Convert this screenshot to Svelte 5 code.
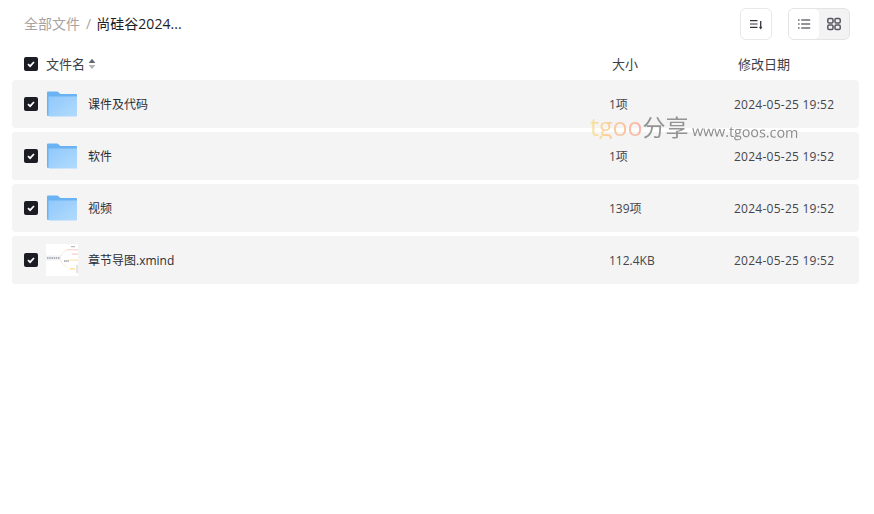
<script>
  let files = [
    { name: "课件及代码", size: "1项", date: "2024-05-25 19:52", type: "folder" },
    { name: "软件", size: "1项", date: "2024-05-25 19:52", type: "folder" },
    { name: "视频", size: "139项", date: "2024-05-25 19:52", type: "folder" },
    { name: "章节导图.xmind", size: "112.4KB", date: "2024-05-25 19:52", type: "xmind" },
  ];
</script>

{#snippet check()}
  <span class="check">
    <svg width="10" height="10" viewBox="0 0 10 10"><path d="M2 5.2 4.1 7.2 8 3" fill="none" stroke="#fff" stroke-width="1.7" /></svg>
  </span>
{/snippet}

<div class="page">
  <div class="top">
    <div class="crumbs">
      <span class="root">全部文件</span>
      <span class="sep">/</span>
      <span class="current">尚硅谷2024...</span>
    </div>
    <div class="tools">
      <button class="sort" aria-label="排序">
        <svg width="16" height="16" viewBox="0 0 16 16" fill="none" stroke="#33343c" stroke-width="1.1">
          <path d="M2 4.6h7.5M2 8h7.5M2 11.4h7.5" />
          <path d="M12.7 5v7" stroke-width="1.3" />
          <path d="M11.4 11l1.3 2.2 1.3-2.2z" fill="#33343c" stroke-width=".5" />
        </svg>
      </button>
      <div class="switch">
        <button class="on" aria-label="列表">
          <svg width="14" height="14" viewBox="0 0 14 14" fill="none" stroke="#26272e" stroke-width="1.2">
            <path d="M1 3h1.6M1 7h1.6M1 11h1.6M4.2 3h9M4.2 7h9M4.2 11h9" />
          </svg>
        </button>
        <button class="off" aria-label="网格">
          <svg width="14" height="14" viewBox="0 0 14 14" fill="none" stroke="#55565e" stroke-width="1.5">
            <rect x="0.8" y="1.4" width="5.2" height="4.6" rx="1.3" />
            <rect x="8" y="1.4" width="5.2" height="4.6" rx="1.3" />
            <rect x="0.8" y="8" width="5.2" height="4.6" rx="1.3" />
            <rect x="8" y="8" width="5.2" height="4.6" rx="1.3" />
          </svg>
        </button>
      </div>
    </div>
  </div>

  <div class="head">
    {@render check()}
    <span class="h-name">文件名</span>
    <svg class="arrows" width="8" height="12" viewBox="0 0 8 12">
      <path d="M4 .8 7.4 5H.6z" fill="#66676e" />
      <path d="M4 11.2 7.4 7H.6z" fill="#b5b5b5" />
    </svg>
    <span class="h-size">大小</span>
    <span class="h-date">修改日期</span>
  </div>

  <div class="list">
    {#each files as f}
      <div class="row">
        {@render check()}
        <span class="icon">
          {#if f.type === "folder"}
            <svg width="32" height="32" viewBox="0 0 32 32">
              <defs>
                <linearGradient id="fg" x1="0" y1="0" x2="1" y2="1">
                  <stop offset="0" stop-color="#90c8fb" />
                  <stop offset="1" stop-color="#b2dbfd" />
                </linearGradient>
              </defs>
              <path d="M1 4.5a1 1 0 0 1 1-1h9.5l3 2.5H30a1 1 0 0 1 1 1V28H2a1 1 0 0 1-1-1z" fill="#6ab3f3" />
              <path d="M2.5 8.5h28.5V28.5H3.5a1 1 0 0 1-1-1z" fill="url(#fg)" />
              <rect x="24" y="10.5" width="5" height="2" fill="#a0d0f9" />
            </svg>
          {:else}
            <svg width="32" height="32" viewBox="0 0 32 32">
              <rect width="32" height="32" fill="#fff" />
              <rect x="0" y="11.5" width="15" height="5" fill="#f0f2f7" />
              <path d="M1 14h13" stroke="#777" stroke-width="1.2" stroke-dasharray="1.5 .7" />
              <path d="M15 12C16 9 18 7 21 6M15 16.5c1 3 3 5 6 6" fill="none" stroke="#f8ead0" stroke-width=".9" />
              <rect x="25" y="2" width="4" height="1.2" fill="#bbb" />
              <rect x="21" y="5" width="11" height="1.4" fill="#fbd9d9" />
              <rect x="26" y="9.5" width="6" height="1.2" fill="#f7c9c9" />
              <path d="M18 17h5" stroke="#999" stroke-width="1.3" stroke-dasharray="1.5 .6" />
              <rect x="23" y="15.5" width="9" height="1.4" fill="#fdeab8" />
              <rect x="24" y="24" width="5" height="1.6" fill="#fde3a0" />
              <rect x="30" y="21" width="2" height="8" fill="#e4e4e4" />
            </svg>
          {/if}
        </span>
        <span class="name">{f.name}</span>
        <span class="size">{f.size}</span>
        <span class="date">{f.date}</span>
      </div>
    {/each}
  </div>

  <div class="mark">
    <span class="tg">tgoo</span><span class="fx">分享</span><span class="url">www.tgoos.com</span>
  </div>
</div>

<style>
  :global(body) {
    background: #fff;
  }
  .page {
    position: relative;
    width: 874px;
    height: 514px;
    font-family: "Open Sans", "Noto Sans CJK SC", sans-serif;
    font-size: 13px;
    color: #2b2c33;
    overflow: hidden;
  }
  .top {
    display: flex;
    justify-content: space-between;
    align-items: center;
    height: 48px;
    padding: 0 24px;
  }
  .crumbs {
    display: flex;
    align-items: center;
    font-size: 14px;
    padding-bottom: 2px;
  }
  .root {
    color: #a7a3a3;
  }
  .sep {
    margin: 0 5px 0 6px;
    color: #a7a3a3;
  }
  .current {
    color: #1f2027;
    letter-spacing: 0.05px;
  }
  .tools {
    display: flex;
    gap: 16px;
  }
  button {
    padding: 0;
    border: 0;
    background: none;
    display: flex;
    align-items: center;
    justify-content: center;
  }
  .sort {
    width: 32px;
    height: 32px;
    border: 1px solid #e8e8e8;
    border-radius: 6px;
  }
  .switch {
    display: flex;
    width: 62px;
    height: 32px;
    box-sizing: border-box;
    border: 1px solid #e4e4e4;
    border-radius: 6px;
    background: #f3f3f3;
  }
  .switch button {
    flex: 1;
  }
  .on {
    background: #fff;
    border-radius: 5px;
  }
  .head {
    display: flex;
    align-items: center;
    height: 32px;
    padding-left: 24px;
    color: #3d3e46;
  }
  .h-name {
    margin-left: 8px;
    padding-bottom: 2px;
  }
  .arrows {
    margin-left: 3px;
  }
  .h-size {
    margin-left: 516px;
    width: 126px;
    padding-bottom: 2px;
  }
  .h-date {
    padding-bottom: 2px;
  }
  .check {
    display: inline-flex;
    align-items: center;
    justify-content: center;
    width: 14px;
    height: 14px;
    flex: none;
    background: #1c1d24;
    border-radius: 2px;
  }
  .list {
    display: flex;
    flex-direction: column;
    gap: 4px;
    margin: 0 15px 0 12px;
  }
  .row {
    display: flex;
    align-items: center;
    height: 48px;
    padding-left: 12px;
    background: #f4f4f4;
    border-radius: 4px;
    font-size: 12px;
  }
  .icon {
    display: flex;
    margin-left: 8px;
    width: 32px;
    height: 32px;
  }
  .name {
    margin-left: 10px;
    width: 521px;
  }
  .size {
    width: 125px;
    color: #44454d;
  }
  .date {
    color: #44454d;
    letter-spacing: 0.25px;
  }
  .mark {
    position: absolute;
    left: 590px;
    top: 114px;
    display: flex;
    align-items: baseline;
    line-height: 1;
    opacity: 0.9;
    pointer-events: none;
  }
  .tg {
    font-size: 25px;
    background: linear-gradient(90deg, #fbe08e, #fbab9e);
    -webkit-background-clip: text;
    background-clip: text;
    color: transparent;
  }
  .fx {
    font-size: 23px;
    color: #8a8a8a;
  }
  .url {
    font-size: 14.3px;
    color: #808080;
    margin-left: 3px;
    transform: translateY(1px) rotate(1deg);
  }
</style>
